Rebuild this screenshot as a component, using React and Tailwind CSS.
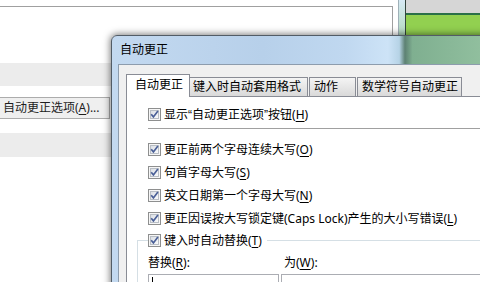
import React from "react";

function U({ children }) {
  return <span className="underline underline-offset-[2px] decoration-1">{children}</span>;
}

function Q({ children }) {
  return <span className="font-['Liberation_Sans',sans-serif]">{children}</span>;
}

function CB() {
  return (
    <svg width="13" height="13" viewBox="0 0 13 13" className="shrink-0 block">
      <defs>
        <linearGradient id="cbg" x1="0" y1="0" x2="1" y2="1">
          <stop offset="0" stopColor="#d9dde3" />
          <stop offset="1" stopColor="#fbfcfd" />
        </linearGradient>
      </defs>
      <rect x="0.5" y="0.5" width="12" height="12" fill="#f6f6f6" stroke="#8e8f8f" />
      <rect x="2.5" y="2.5" width="8" height="8" fill="url(#cbg)" stroke="#b9bec5" />
      <path d="M3.2 6.3 L5.4 8.9 L9.9 2.9" fill="none" stroke="#4a5f97" strokeWidth="1.7" />
    </svg>
  );
}

function Row({ children, className = "" }) {
  return (
    <div className={"flex items-center h-[13px] " + className}>
      <CB />
      <span className="ml-[3px] whitespace-nowrap">{children}</span>
    </div>
  );
}

export default function App() {
  return (
    <div className="relative w-[480px] h-[282px] overflow-hidden bg-white text-[12px] leading-[16px] text-black font-['Noto_Sans','Noto_Sans_CJK_SC',sans-serif]">
      {/* background window */}
      <div className="flex flex-col">
        <div className="h-[6px]" />
        <div className="h-[30px] w-[393px] border-t border-r border-[#a0a0a0]" />
        <div className="h-[27px]" />
        <div className="h-[23px] bg-[#ececec]" />
        <div className="h-[11px]" />
        <div className="h-[22px] w-[110px] border border-l-0 border-[#acacac] bg-[#efefef] pl-[3px] flex items-center text-[#1e1e1e] whitespace-nowrap">
          自动更正选项(<U>A</U>)...
        </div>
        <div className="h-[14px]" />
        <div className="h-[24px] bg-[#ececec]" />
      </div>

      {/* green window behind */}
      <div className="absolute left-[398px] top-0 w-[82px] h-[36px] flex">
        <div className="w-[7px] border-l border-[#9fb0b8] bg-gradient-to-b from-[#d7eaf5] to-[#b3d9bd]" />
        <div className="flex-1 flex flex-col border-l border-[#33443c]">
          <div className="h-[13px] bg-[#d6d6d6]" />
          <div className="h-[2px] bg-[#2a7048]" />
          <div className="flex-1 bg-[#92d050]" />
        </div>
      </div>

      {/* stray edge at right */}
      <div className="absolute left-[478px] top-[149px] w-[2px] h-[22px] bg-[#7a7a7a]" />

      {/* dialog */}
      <div className="absolute left-[111px] top-[35px] w-[380px] h-[260px] rounded-tl-[6px] border border-[#525c66] shadow-[0_0_7px_1px_rgba(0,0,0,0.5)] bg-[linear-gradient(90deg,#c3d9f0_0%,#b7d0ea_40%,#c0d8f0_62%,#cde3f7_73%,#b6d3e6_76%,#5d8173_77.5%,#7faf90_79.5%,#93c1a0_100%)] flex flex-col">
        <div className="h-[28px] flex items-center pl-[8px] whitespace-nowrap">自动更正</div>
        <div className="flex-1 ml-[6px] border-l border-t border-[#8d9cad] bg-[#f0f0f0] pl-[7px] pt-[9px] flex flex-col">
          {/* tabs */}
          <div className="flex items-end h-[22px] whitespace-nowrap">
            <div className="relative z-10 h-[23px] -mb-[1px] w-[64px] border border-b-0 border-[#898c95] bg-white pl-[8px] pt-[2px]">
              自动更正
            </div>
            <div className="h-[19px] w-[118px] border border-l-0 border-b-0 border-[#898c95] bg-gradient-to-b from-[#f4f4f4] to-[#d9d9d9] pl-[3px] pt-[1px]">
              键入时自动套用格式
            </div>
            <div className="ml-px h-[19px] w-[47px] border border-b-0 border-[#898c95] bg-gradient-to-b from-[#f4f4f4] to-[#d9d9d9] pl-[4px] pt-[1px]">
              动作
            </div>
            <div className="ml-px h-[19px] w-[105px] border border-b-0 border-[#898c95] bg-gradient-to-b from-[#f4f4f4] to-[#d9d9d9] pl-[4px] pt-[1px]">
              数学符号自动更正
            </div>
          </div>
          {/* panel */}
          <div className="flex-1 border-t border-l border-[#898c95] bg-white pt-[11px] flex flex-col">
            <Row className="ml-[21px]">
              显示<Q>“</Q>自动更正选项<Q>”</Q>按钮(<U>H</U>)
            </Row>
            <div className="ml-[21px] mt-[7px] h-px bg-[#a0a0a0]" />
            <Row className="ml-[21px] mt-[14px]">
              更正前两个字母连续大写(<U>O</U>)
            </Row>
            <Row className="ml-[21px] mt-[10px]">
              句首字母大写(<U>S</U>)
            </Row>
            <Row className="ml-[21px] mt-[10px]">
              英文日期第一个字母大写(<U>N</U>)
            </Row>
            <Row className="ml-[21px] mt-[10px]">
              更正因误按大写锁定键(Caps Lock)产生的大小写错误(<U>L</U>)
            </Row>
            {/* group box */}
            <div className="ml-[10px] mt-[9px] flex flex-col">
              <div className="flex items-center h-[13px]">
                <div className="w-[11px] h-px bg-[#d5dfe5]" />
                <CB />
                <span className="ml-[3px] whitespace-nowrap">
                  键入时自动替换(<U>T</U>)
                </span>
                <div className="flex-1 h-px bg-[#d5dfe5] ml-[5px]" />
              </div>
              <div className="-mt-[6px] border-l border-[#d5dfe5] pl-[10px] pt-[14px] flex flex-col">
                <div className="flex gap-[2px] whitespace-nowrap">
                  <div className="w-[131px]">
                    替换(<U>R</U>):
                  </div>
                  <div className="pl-[3px]">
                    为(<U>W</U>):
                  </div>
                </div>
                <div className="flex gap-[2px] mt-[3px]">
                  <div className="w-[131px] h-[20px] border border-[#abadb3] pl-[3px] pt-[2px]">
                    <div className="w-px h-[14px] bg-black" />
                  </div>
                  <div className="flex-1 h-[20px] border border-[#abadb3]" />
                </div>
              </div>
            </div>
          </div>
        </div>
      </div>
    </div>
  );
}
